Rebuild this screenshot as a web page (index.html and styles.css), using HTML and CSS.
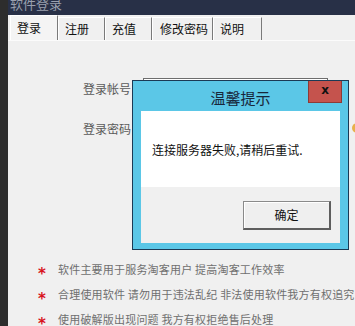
FILE: index.html
```html
<!DOCTYPE html>
<html lang="zh-CN">
<head>
    <meta charset="UTF-8">
    <title>软件登录</title>
    <link rel="stylesheet" href="styles.css">
</head>
<body>
    <div class="window">
        <div class="titlebar"><span class="title">软件登录</span></div>

        <div class="tabs">
            <div class="tab active">登录</div>
            <div class="tab">注册</div>
            <div class="tab">充值</div>
            <div class="tab wide">修改密码</div>
            <div class="tab">说明</div>
        </div>

        <div class="panel">
            <div class="form">
                <div class="row">
                    <label>登录帐号</label>
                    <div class="input"></div>
                </div>
                <div class="row">
                    <label>登录密码</label>
                    <div class="input"></div>
                    <span class="eye"></span>
                </div>
            </div>

            <ul class="notes">
                <li><span class="star">*</span>软件主要用于服务淘客用户 提高淘客工作效率</li>
                <li><span class="star">*</span>合理使用软件 请勿用于违法乱纪 非法使用软件我方有权追究</li>
                <li><span class="star">*</span>使用破解版出现问题 我方有权拒绝售后处理</li>
            </ul>
        </div>
    </div>

    <!-- 弹出提示框 -->
    <div class="dialog">
        <div class="dialog-head">
            <span class="dialog-title">温馨提示</span>
            <span class="close">x</span>
        </div>
        <div class="dialog-body">连接服务器失败,请稍后重试.</div>
        <div class="dialog-foot">
            <button class="ok">确定</button>
        </div>
    </div>
</body>
</html>
```

FILE: styles.css
```css
body {
    margin: 0;
    padding-left: 8px;
    height: 326px;
    overflow: hidden;
    background-color: #2d2d2d;
    font-family: "Noto Sans CJK SC", "Noto Sans", sans-serif;
}
.window {
    display: flex;
    flex-direction: column;
    height: 100%;
    overflow: hidden;
    background-color: #f0f0f0;
}
.titlebar {
    height: 15px;
    flex: none;
    overflow: hidden;
    background-color: #283047;
    padding-left: 2px;
}
.title {
    display: block;
    margin-top: -4px;
    font-size: 13px;
    line-height: 15px;
    color: #9aa0ae;
}
.tabs {
    display: flex;
    align-items: flex-start;
    height: 25px;
    flex: none;
    padding-left: 2px;
    background-color: #f0f0f0;
}
.tab {
    box-sizing: border-box;
    width: 47px;
    height: 23px;
    margin-top: 2px;
    padding-left: 6px;
    font-size: 12px;
    line-height: 22px;
    color: #111;
    border-top: 1px solid #fff;
    border-left: 1px solid #fff;
    border-right: 1px solid #7a7a7a;
}
.tab.active {
    width: 48px;
    height: 26px;
    margin-top: 0;
    line-height: 23px;
    background-color: #f4f4f4;
}
.tab.wide {
    width: 61px;
    padding-left: 7px;
}
.tab:last-child {
    width: 49px;
}
.panel {
    flex: 1;
    border-top: 1px solid #fbfbfb;
    padding-top: 37px;
}
.row {
    display: flex;
    align-items: center;
    height: 20px;
    margin-bottom: 20px;
    padding-left: 75px;
}
.row > * {
    flex: none;
}
.row label {
    width: 48px;
    margin-right: 12px;
    font-size: 12px;
    color: #5a5a5a;
    white-space: nowrap;
}
.input {
    box-sizing: border-box;
    width: 185px;
    height: 20px;
    border: 1px solid #6d6d6d;
    background-color: #fff;
}
.eye {
    width: 10px;
    height: 10px;
    margin-left: 24px;
    border-radius: 50%;
    background-color: #e8b04a;
}
.notes {
    list-style: none;
    margin: 119px 0 0 0;
    padding: 0 0 0 30px;
}
.notes li {
    height: 25px;
    line-height: 25px;
    font-size: 11px;
    letter-spacing: 0.2px;
    color: #6f6f6f;
    white-space: nowrap;
}
.star {
    display: inline-block;
    width: 20px;
    font-family: "DejaVu Sans", sans-serif;
    font-size: 15px;
    font-weight: bold;
    color: #d8141e;
    vertical-align: -5px;
}
.dialog {
    position: absolute;
    left: 132px;
    top: 80px;
    width: 199px;
    padding: 0 8px 6px;
    border: 1px solid #1b3a55;
    background-color: #5bc7e7;
}
.dialog-head {
    display: flex;
    justify-content: center;
    align-items: center;
    height: 30px;
    position: relative;
}
.dialog-title {
    font-size: 15px;
    color: #18263a;
    margin-top: 2px;
}
.close {
    position: absolute;
    top: 0;
    right: -2px;
    box-sizing: border-box;
    width: 34px;
    height: 22px;
    background-color: #c5534d;
    border: 1px solid #8d3a36;
    border-top: none;
    text-align: center;
    font-family: "DejaVu Sans", sans-serif;
    font-weight: bold;
    font-size: 12px;
    line-height: 19px;
    color: #111;
}
.dialog-body {
    display: flex;
    align-items: center;
    height: 76px;
    padding-left: 11px;
    background-color: #fff;
    font-size: 12px;
    color: #111;
}
.dialog-foot {
    display: flex;
    align-items: center;
    justify-content: flex-end;
    height: 56px;
    padding-right: 9px;
    background-color: #f0f0f0;
}
.ok {
    box-sizing: border-box;
    width: 88px;
    height: 29px;
    padding: 0;
    background-color: #efefef;
    border-top: 1px solid #8a8a8a;
    border-left: 1px solid #8a8a8a;
    border-right: 2px solid #5e5e5e;
    border-bottom: 2px solid #5e5e5e;
    box-shadow: inset 1px 1px 0 #fff;
    font-family: "Noto Sans CJK SC", sans-serif;
    font-size: 12px;
    color: #111;
}
```
